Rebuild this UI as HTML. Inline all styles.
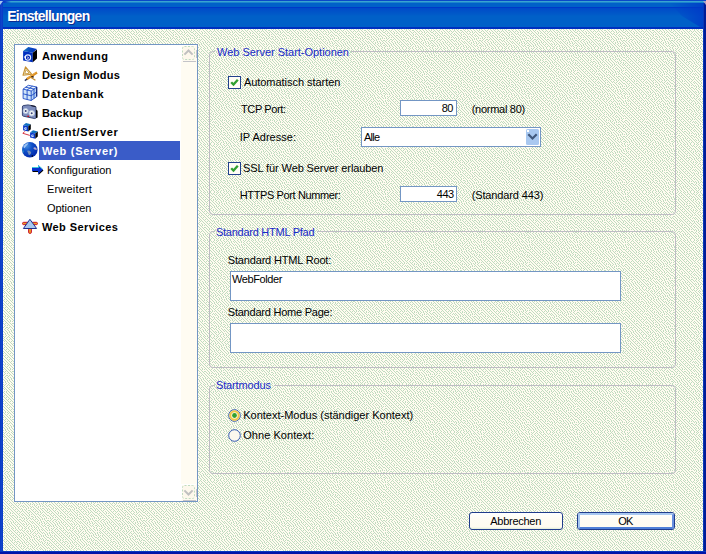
<!DOCTYPE html><html><head><meta charset="utf-8"><title>Einstellungen</title><style>
html,body{margin:0;padding:0}
body{width:706px;height:554px;position:relative;overflow:hidden;background:#fff;font:11px "Liberation Sans",sans-serif;color:#000}
.a{position:absolute}
.t{position:absolute;white-space:pre;line-height:13px;height:13px}
.bx{position:absolute;box-sizing:border-box;border:1px solid #7396C4;background:#fff}
.g{position:absolute;box-sizing:border-box;border:1px solid #BEBCC4;border-radius:4px}
.gap{position:absolute;height:3px}
svg{position:absolute;overflow:visible}

</style></head><body>
<svg width="706" height="554" style="left:0;top:0" shape-rendering="crispEdges"><defs><pattern id="dz" width="48" height="48" patternUnits="userSpaceOnUse"><rect width="48" height="48" fill="#FFFBF0"/><path d="M0 0.5h1M3 0.5h1M5 0.5h1M8 0.5h1M11 0.5h1M13 0.5h1M15 0.5h1M18 0.5h1M22 0.5h1M24 0.5h1M26 0.5h1M28 0.5h1M31 0.5h1M35 0.5h1M38 0.5h1M42 0.5h1M45 0.5h1M1 1.5h1M4 1.5h1M7 1.5h1M9 1.5h1M12 1.5h1M16 1.5h1M19 1.5h1M21 1.5h1M25 1.5h1M29 1.5h1M32 1.5h1M34 1.5h1M36 1.5h1M39 1.5h1M41 1.5h1M43 1.5h1M46 1.5h1M1 2.5h1M3 2.5h1M6 2.5h1M10 2.5h1M13 2.5h1M15 2.5h1M17 2.5h1M20 2.5h1M22 2.5h1M24 2.5h1M27 2.5h1M30 2.5h1M33 2.5h1M37 2.5h1M39 2.5h1M42 2.5h1M44 2.5h1M47 2.5h1M4 3.5h1M7 3.5h1M9 3.5h1M11 3.5h1M14 3.5h1M18 3.5h1M23 3.5h1M26 3.5h1M28 3.5h1M30 3.5h1M32 3.5h1M35 3.5h1M37 3.5h1M40 3.5h1M45 3.5h1M1 4.5h1M3 4.5h1M5 4.5h1M8 4.5h1M12 4.5h1M15 4.5h1M17 4.5h1M19 4.5h1M21 4.5h1M24 4.5h1M27 4.5h1M31 4.5h1M34 4.5h1M38 4.5h1M41 4.5h1M43 4.5h1M46 4.5h1M1 5.5h1M4 5.5h1M6 5.5h1M9 5.5h1M11 5.5h1M13 5.5h1M16 5.5h1M20 5.5h1M22 5.5h1M25 5.5h1M28 5.5h1M30 5.5h1M33 5.5h1M35 5.5h1M37 5.5h1M39 5.5h1M42 5.5h1M44 5.5h1M47 5.5h1M2 6.5h1M7 6.5h1M10 6.5h1M14 6.5h1M17 6.5h1M19 6.5h1M23 6.5h1M26 6.5h1M29 6.5h1M32 6.5h1M36 6.5h1M40 6.5h1M45 6.5h1M47 6.5h1M0 7.5h1M2 7.5h1M4 7.5h1M6 7.5h1M8 7.5h1M11 7.5h1M13 7.5h1M15 7.5h1M18 7.5h1M21 7.5h1M23 7.5h1M25 7.5h1M27 7.5h1M30 7.5h1M33 7.5h1M35 7.5h1M38 7.5h1M41 7.5h1M43 7.5h1M45 7.5h1M3 8.5h1M6 8.5h1M9 8.5h1M12 8.5h1M16 8.5h1M19 8.5h1M21 8.5h1M24 8.5h1M28 8.5h1M31 8.5h1M34 8.5h1M36 8.5h1M39 8.5h1M41 8.5h1M43 8.5h1M46 8.5h1M0 9.5h1M2 9.5h1M4 9.5h1M7 9.5h1M10 9.5h1M13 9.5h1M15 9.5h1M17 9.5h1M20 9.5h1M23 9.5h1M26 9.5h1M29 9.5h1M31 9.5h1M33 9.5h1M37 9.5h1M39 9.5h1M44 9.5h1M47 9.5h1M1 10.5h1M5 10.5h1M8 10.5h1M11 10.5h1M14 10.5h1M18 10.5h1M21 10.5h1M24 10.5h1M27 10.5h1M29 10.5h1M34 10.5h1M36 10.5h1M40 10.5h1M42 10.5h1M45 10.5h1M2 11.5h1M4 11.5h1M6 11.5h1M9 11.5h1M12 11.5h1M15 11.5h1M17 11.5h1M19 11.5h1M22 11.5h1M25 11.5h1M27 11.5h1M30 11.5h1M32 11.5h1M34 11.5h1M37 11.5h1M39 11.5h1M41 11.5h1M43 11.5h1M46 11.5h1M0 12.5h1M3 12.5h1M7 12.5h1M10 12.5h1M12 12.5h1M14 12.5h1M20 12.5h1M23 12.5h1M26 12.5h1M29 12.5h1M32 12.5h1M35 12.5h1M38 12.5h1M43 12.5h1M45 12.5h1M47 12.5h1M1 13.5h1M4 13.5h1M6 13.5h1M8 13.5h1M11 13.5h1M15 13.5h1M17 13.5h2M21 13.5h1M24 13.5h1M27 13.5h1M30 13.5h1M33 13.5h1M36 13.5h1M39 13.5h1M41 13.5h1M44 13.5h1M2 14.5h1M5 14.5h1M9 14.5h1M12 14.5h1M14 14.5h1M16 14.5h1M19 14.5h1M22 14.5h1M24 14.5h1M26 14.5h1M28 14.5h1M31 14.5h1M34 14.5h1M37 14.5h1M40 14.5h1M42 14.5h1M45 14.5h1M47 14.5h1M1 15.5h1M3 15.5h1M6 15.5h1M8 15.5h1M10 15.5h1M13 15.5h1M17 15.5h1M20 15.5h1M22 15.5h1M25 15.5h1M29 15.5h1M32 15.5h1M35 15.5h1M38 15.5h1M42 15.5h1M44 15.5h1M47 15.5h1M0 16.5h1M4 16.5h1M7 16.5h1M11 16.5h1M14 16.5h1M16 16.5h1M19 16.5h1M23 16.5h1M26 16.5h1M28 16.5h1M30 16.5h1M33 16.5h1M36 16.5h1M38 16.5h1M40 16.5h1M43 16.5h1M46 16.5h1M1 17.5h1M3 17.5h1M5 17.5h1M8 17.5h1M10 17.5h1M12 17.5h1M15 17.5h1M18 17.5h1M21 17.5h1M24 17.5h1M27 17.5h1M31 17.5h1M34 17.5h1M36 17.5h1M39 17.5h1M41 17.5h1M44 17.5h1M47 17.5h1M2 18.5h1M6 18.5h1M9 18.5h1M13 18.5h1M16 18.5h1M19 18.5h1M21 18.5h1M23 18.5h1M25 18.5h1M28 18.5h1M30 18.5h1M32 18.5h1M35 18.5h1M38 18.5h1M42 18.5h1M45 18.5h1M0 19.5h1M3 19.5h1M5 19.5h1M7 19.5h1M10 19.5h1M12 19.5h1M14 19.5h1M17 19.5h1M20 19.5h1M24 19.5h1M27 19.5h1M32 19.5h1M34 19.5h1M37 19.5h1M40 19.5h1M43 19.5h1M46 19.5h1M1 20.5h1M4 20.5h1M8 20.5h1M11 20.5h1M15 20.5h1M18 20.5h1M21 20.5h1M23 20.5h1M26 20.5h1M28 20.5h1M30 20.5h1M33 20.5h1M36 20.5h1M39 20.5h1M41 20.5h1M44 20.5h1M47 20.5h1M2 21.5h1M5 21.5h1M7 21.5h1M9 21.5h1M12 21.5h1M14 21.5h1M16 21.5h1M19 21.5h1M22 21.5h1M25 21.5h1M29 21.5h1M31 21.5h1M34 21.5h1M37 21.5h1M40 21.5h1M42 21.5h1M45 21.5h1M1 22.5h1M3 22.5h1M6 22.5h1M10 22.5h1M13 22.5h1M17 22.5h1M20 22.5h1M23 22.5h1M26 22.5h1M28 22.5h1M32 22.5h1M35 22.5h1M38 22.5h1M43 22.5h1M45 22.5h1M47 22.5h1M4 23.5h1M7 23.5h1M9 23.5h1M11 23.5h1M14 23.5h1M16 23.5h1M18 23.5h1M20 23.5h1M22 23.5h1M24 23.5h1M27 23.5h1M30 23.5h1M33 23.5h1M36 23.5h1M39 23.5h1M41 23.5h1M43 23.5h1M46 23.5h1M1 24.5h2M5 24.5h1M8 24.5h1M12 24.5h1M15 24.5h1M19 24.5h1M25 24.5h1M28 24.5h1M30 24.5h1M32 24.5h1M34 24.5h1M37 24.5h1M39 24.5h1M42 24.5h1M45 24.5h1M0 25.5h1M3 25.5h1M6 25.5h1M9 25.5h1M11 25.5h1M13 25.5h1M16 25.5h1M18 25.5h1M21 25.5h1M23 25.5h1M26 25.5h1M29 25.5h1M34 25.5h1M36 25.5h1M40 25.5h1M43 25.5h1M46 25.5h1M1 26.5h1M4 26.5h1M7 26.5h1M10 26.5h1M14 26.5h1M17 26.5h1M20 26.5h1M22 26.5h1M24 26.5h1M27 26.5h1M30 26.5h1M32 26.5h1M35 26.5h1M38 26.5h1M40 26.5h1M42 26.5h1M44 26.5h1M47 26.5h1M2 27.5h1M5 27.5h1M8 27.5h1M11 27.5h1M13 27.5h1M15 27.5h1M18 27.5h1M23 27.5h1M25 27.5h1M28 27.5h1M31 27.5h1M33 27.5h1M36 27.5h1M38 27.5h1M45 27.5h1M0 28.5h1M3 28.5h1M5 28.5h1M7 28.5h1M9 28.5h1M12 28.5h1M16 28.5h1M19 28.5h1M21 28.5h1M26 28.5h1M28 28.5h1M30 28.5h1M34 28.5h1M37 28.5h1M40 28.5h1M42 28.5h2M46 28.5h1M1 29.5h1M4 29.5h1M8 29.5h1M10 29.5h1M13 29.5h1M15 29.5h1M17 29.5h1M20 29.5h1M22 29.5h1M24 29.5h1M26 29.5h1M31 29.5h1M33 29.5h1M35 29.5h1M38 29.5h1M41 29.5h1M44 29.5h1M47 29.5h1M2 30.5h1M5 30.5h1M7 30.5h1M11 30.5h1M14 30.5h1M18 30.5h1M22 30.5h1M25 30.5h1M28 30.5h2M32 30.5h1M36 30.5h1M39 30.5h1M42 30.5h1M45 30.5h1M47 30.5h1M1 31.5h1M3 31.5h1M6 31.5h1M9 31.5h1M12 31.5h1M15 31.5h1M17 31.5h1M19 31.5h1M21 31.5h1M23 31.5h1M26 31.5h1M30 31.5h1M33 31.5h1M35 31.5h1M37 31.5h1M40 31.5h1M43 31.5h1M46 31.5h1M0 32.5h1M4 32.5h1M7 32.5h1M10 32.5h1M13 32.5h1M16 32.5h1M20 32.5h1M24 32.5h1M27 32.5h1M29 32.5h1M31 32.5h1M34 32.5h1M38 32.5h1M40 32.5h1M42 32.5h1M44 32.5h1M47 32.5h1M1 33.5h1M3 33.5h1M5 33.5h1M8 33.5h1M10 33.5h1M12 33.5h1M14 33.5h1M17 33.5h1M19 33.5h1M22 33.5h1M25 33.5h1M28 33.5h1M32 33.5h1M35 33.5h1M37 33.5h1M41 33.5h1M45 33.5h1M2 34.5h1M6 34.5h1M9 34.5h1M15 34.5h1M18 34.5h1M21 34.5h1M23 34.5h1M26 34.5h1M29 34.5h1M31 34.5h1M33 34.5h1M36 34.5h1M38 34.5h1M40 34.5h1M43 34.5h1M46 34.5h1M0 35.5h1M3 35.5h1M5 35.5h1M7 35.5h1M10 35.5h1M12 35.5h2M16 35.5h1M19 35.5h1M22 35.5h1M24 35.5h1M27 35.5h1M29 35.5h1M34 35.5h1M39 35.5h1M42 35.5h1M44 35.5h1M47 35.5h1M1 36.5h1M4 36.5h1M8 36.5h1M11 36.5h1M14 36.5h1M17 36.5h1M20 36.5h1M25 36.5h1M28 36.5h1M31 36.5h2M35 36.5h1M37 36.5h1M40 36.5h1M43 36.5h1M45 36.5h1M2 37.5h1M5 37.5h1M7 37.5h1M9 37.5h1M12 37.5h1M15 37.5h1M17 37.5h1M19 37.5h1M21 37.5h1M23 37.5h1M26 37.5h1M29 37.5h1M33 37.5h1M35 37.5h1M38 37.5h1M41 37.5h1M46 37.5h1M0 38.5h1M2 38.5h1M4 38.5h1M10 38.5h1M13 38.5h1M16 38.5h1M22 38.5h1M24 38.5h1M26 38.5h1M28 38.5h1M30 38.5h1M32 38.5h1M36 38.5h1M39 38.5h1M42 38.5h1M44 38.5h1M46 38.5h1M3 39.5h1M6 39.5h2M9 39.5h1M11 39.5h1M14 39.5h1M17 39.5h1M19 39.5h2M24 39.5h1M27 39.5h1M31 39.5h1M33 39.5h1M35 39.5h1M37 39.5h1M40 39.5h1M42 39.5h1M44 39.5h1M0 40.5h1M2 40.5h1M5 40.5h1M8 40.5h1M12 40.5h1M15 40.5h1M18 40.5h1M21 40.5h1M23 40.5h1M26 40.5h1M29 40.5h1M34 40.5h1M38 40.5h1M40 40.5h1M45 40.5h1M47 40.5h1M1 41.5h1M4 41.5h1M7 41.5h1M10 41.5h1M13 41.5h1M16 41.5h1M19 41.5h1M22 41.5h1M24 41.5h1M27 41.5h1M30 41.5h1M32 41.5h1M35 41.5h1M37 41.5h1M41 41.5h1M43 41.5h1M46 41.5h1M2 42.5h1M5 42.5h1M8 42.5h1M11 42.5h1M13 42.5h1M15 42.5h1M17 42.5h1M20 42.5h1M25 42.5h1M28 42.5h1M31 42.5h1M33 42.5h1M36 42.5h1M39 42.5h1M41 42.5h1M44 42.5h1M47 42.5h1M0 43.5h1M3 43.5h1M6 43.5h1M9 43.5h1M11 43.5h1M14 43.5h1M18 43.5h1M21 43.5h1M23 43.5h1M26 43.5h1M29 43.5h1M32 43.5h1M34 43.5h1M37 43.5h1M39 43.5h1M42 43.5h1M44 43.5h1M46 43.5h1M1 44.5h1M4 44.5h1M7 44.5h1M9 44.5h1M12 44.5h1M15 44.5h1M17 44.5h1M19 44.5h1M22 44.5h1M24 44.5h1M26 44.5h1M28 44.5h1M30 44.5h1M35 44.5h1M38 44.5h1M41 44.5h1M45 44.5h1M0 45.5h1M2 45.5h1M5 45.5h1M7 45.5h1M10 45.5h1M13 45.5h1M16 45.5h1M20 45.5h1M23 45.5h1M27 45.5h1M31 45.5h1M33 45.5h1M36 45.5h1M39 45.5h1M42 45.5h1M44 45.5h1M47 45.5h1M1 46.5h1M3 46.5h1M5 46.5h1M8 46.5h1M11 46.5h1M14 46.5h1M17 46.5h1M19 46.5h1M21 46.5h1M24 46.5h1M26 46.5h1M29 46.5h1M31 46.5h1M34 46.5h1M37 46.5h1M40 46.5h1M43 46.5h1M45 46.5h1M0 47.5h1M6 47.5h1M9 47.5h1M12 47.5h1M15 47.5h1M18 47.5h1M22 47.5h1M25 47.5h1M28 47.5h1M32 47.5h1M34 47.5h1M36 47.5h1M38 47.5h1M41 47.5h1M46 47.5h1" stroke="#C0DCC0" stroke-width="1" fill="none"/></pattern></defs><rect width="706" height="554" fill="url(#dz)"/></svg>
<!-- title bar -->
<div class="a" style="left:0;top:0;width:706px;height:29px;background:linear-gradient(to bottom,#0A48C8 0,#0A48C8 1px,#38A4D0 1px,#38A4D0 2px,#1C84CC 2px,#1C84CC 3px,#0060C8 3px,#0060C8 7px,#0038C8 7px,#0038C8 8px,#004AC8 8px,#005CC8 15px,#0060C8 16px,#0060C8 27px,#0030C0 27px,#0030C0 29px)"></div>
<!-- window borders -->
<svg width="46" height="24" style="left:660px;top:3px"><defs><linearGradient id="tr" x1="0" y1="0" x2="1" y2="0"><stop offset="0" stop-color="#0038C8" stop-opacity="0"/><stop offset="1" stop-color="#0038C8" stop-opacity="0.85"/></linearGradient></defs><path d="M10 0H46V24H40L22 13z" fill="url(#tr)"/></svg>
<div class="a" style="left:0;top:0;width:3px;height:554px;background:linear-gradient(to right,#0838C8,#1044C8 50%,#0838C8)"></div>
<div class="a" style="left:703px;top:3px;width:3px;height:551px;background:linear-gradient(to right,#0838B8 0,#0838B8 1px,#001C98 1px)"></div>
<div class="a" style="left:0;top:551px;width:706px;height:3px;background:linear-gradient(to bottom,#0838C0 0,#0838C0 1px,#0014A8 1px)"></div>
<div class="a" style="left:3px;top:1px;width:8px;height:2px;background:linear-gradient(to right,#0A40C8 0,#0A40C8 2px,rgba(10,64,200,0) 8px)"></div>
<svg width="6" height="6" style="left:0;top:0"><path d="M0 1h3L0 5z" fill="#A8C8F0"/></svg>
<svg width="6" height="6" style="left:700px;top:0"><path d="M6 1h-3L6 5z" fill="#A8A0C8"/></svg>
<!-- list box -->
<div class="bx" style="left:14px;top:44px;width:184px;height:458px"></div>
<div class="a" style="left:181px;top:45px;width:16px;height:456px;background:#FFFCF2"></div>
<div class="a" style="left:39px;top:141px;width:141px;height:19px;background:#3A5CC8"></div>
<!-- scroll buttons -->
<svg width="16" height="17" style="left:181px;top:45px" shape-rendering="crispEdges"><rect x="0" y="0" width="16" height="17" fill="#FEFAF0"/><path d="M0.5 16V0.5H15" stroke="#fff" fill="none"/><path d="M2 16.5H14.5M15.5 5V13" stroke="#C4C4C8" fill="none"/><rect x="1.5" y="1.5" width="12" height="13" rx="2" fill="#FDF8EC" stroke="#C0DCC0" stroke-dasharray="2 1.5" shape-rendering="auto"/><path d="M3.4 9.6L7.5 5.5L11.6 9.6" stroke="#C0C0C0" stroke-width="2" fill="none" shape-rendering="auto"/></svg>
<svg width="16" height="17" style="left:181px;top:484px" shape-rendering="crispEdges"><rect x="0" y="0" width="16" height="17" fill="#FEFAF0"/><path d="M0.5 16V0.5H15" stroke="#fff" fill="none"/><path d="M2 16.5H14.5M15.5 5V13" stroke="#C4C4C8" fill="none"/><rect x="1.5" y="1.5" width="12" height="13" rx="2" fill="#FDF8EC" stroke="#C0DCC0" stroke-dasharray="2 1.5" shape-rendering="auto"/><path d="M3.4 6.4L7.5 10.5L11.6 6.4" stroke="#C0C0C0" stroke-width="2" fill="none" shape-rendering="auto"/></svg>
<!-- group boxes -->
<div class="g" style="left:209px;top:51px;width:467px;height:164px"></div>
<div class="g" style="left:209px;top:231px;width:467px;height:137px"></div>
<div class="g" style="left:209px;top:385px;width:467px;height:89px"></div>
<svg width="140" height="3" style="left:215px;top:50px" shape-rendering="crispEdges"><rect width="136" height="3" fill="url(#dz)"/></svg>
<svg width="140" height="3" style="left:215px;top:230px" shape-rendering="crispEdges"><rect width="102" height="3" fill="url(#dz)"/></svg>
<svg width="140" height="3" style="left:215px;top:384px" shape-rendering="crispEdges"><rect width="59" height="3" fill="url(#dz)"/></svg>
<!-- inputs -->
<div class="bx" style="left:400px;top:100px;width:57px;height:16px"></div>
<div class="bx" style="left:361px;top:127px;width:180px;height:20px"></div>
<svg width="13" height="16" style="left:526px;top:129px"><rect width="13" height="16" rx="1.5" fill="#A8C8F0"/><rect x="1" y="1" width="2" height="2" fill="#fff"/><path d="M2.3 5.3L6.5 9.5L10.7 5.3" stroke="#40587C" stroke-width="2.2" fill="none"/></svg>
<div class="bx" style="left:400px;top:186px;width:57px;height:16px"></div>
<div class="bx" style="left:230px;top:271px;width:391px;height:30px"></div>
<div class="bx" style="left:230px;top:323px;width:391px;height:30px"></div>
<!-- checkboxes -->
<svg width="13" height="13" style="left:228px;top:76px"><rect x="0.5" y="0.5" width="12" height="12" fill="#FFFDF6" stroke="#20408C"/><path d="M3.2 6.2L5.5 8.6L9.8 3.8" stroke="#30A030" stroke-width="2.3" fill="none"/></svg>
<svg width="13" height="13" style="left:228px;top:162px"><rect x="0.5" y="0.5" width="12" height="12" fill="#FFFDF6" stroke="#20408C"/><path d="M3.2 6.2L5.5 8.6L9.8 3.8" stroke="#30A030" stroke-width="2.3" fill="none"/></svg>
<!-- radios -->
<svg width="13" height="13" style="left:228px;top:409px"><circle cx="6.5" cy="6.5" r="5.8" fill="#FFF8E0" stroke="#3058B0" stroke-width="1"/><circle cx="6.5" cy="6.5" r="4.2" fill="none" stroke="#F0C848" stroke-width="2"/><circle cx="6.5" cy="6.5" r="2.4" fill="#30A030"/></svg>
<svg width="13" height="13" style="left:228px;top:429px"><circle cx="6.5" cy="6.5" r="5.8" fill="#FBF8EE" stroke="#3058B0" stroke-width="1"/></svg>
<!-- buttons -->
<div class="a" style="left:469px;top:512px;width:94px;height:18px;box-sizing:border-box;border:1px solid #203C8C;border-radius:3px;background:linear-gradient(to bottom,#fff 0,#FFFCF4 6px,#FFFBF0 14px,#E0ECD8 16px)"></div>
<div class="a" style="left:577px;top:512px;width:98px;height:18px;box-sizing:border-box;border:1px solid #203C8C;border-radius:3px;background:linear-gradient(to bottom,#fff 0,#FFFCF4 6px,#FFFBF0 16px)"></div>
<div class="a" style="left:578px;top:513px;width:96px;height:16px;box-sizing:border-box;border-radius:2px;border:2px solid #A8C8F0;border-bottom-color:#5080D8;border-right-color:#6890E0"></div>
<!-- arrow -->
<svg width="13" height="11" style="left:32px;top:164px"><path d="M0.5 4h6V2l5 4.5l-5 4.5V8h-6z" fill="#000"/><path d="M0 3h6V1l5 4.5l-5 4.5V7h-6z" fill="#0830D0"/><path d="M0 3.5h6.5V1.5l4 3.6" stroke="#40C8D8" stroke-width="1" fill="none"/></svg>
<!-- icons -->
<svg width="16" height="16" style="left:22px;top:47px"><defs><linearGradient id="ct" x1="0" y1="0" x2="1" y2="0"><stop offset="0" stop-color="#1880C0"/><stop offset="0.5" stop-color="#0848C0"/><stop offset="1" stop-color="#0030C0"/></linearGradient></defs><path d="M1.1 4.1L6.3 0L15 2L10.8 5.8z" fill="url(#ct)"/><path d="M1.1 4.1L10.8 5.8V15.3L1.1 13.5z" fill="#0030C0"/><path d="M10.8 5.8L15 2.5V11.4L10.8 15.3z" fill="#000"/><circle cx="5.9" cy="10.6" r="2.7" fill="#0020B0" stroke="#E0ECFF" stroke-width="1.1"/><path d="M1.8 9.6h2.6l-1 2.2z" fill="#fff"/><path d="M5 9.8l1.8 1l-1.6 1" stroke="#fff" stroke-width="0.7" fill="none"/></svg>
<svg width="16" height="16" style="left:22px;top:66px"><path d="M3.5 0.8L1 9.2L9.8 8.3z" fill="#E4EED8" stroke="#C89030" stroke-width="1.1" stroke-linejoin="round"/><path d="M4.1 3.6L2.8 7.8L7.2 7.3z" fill="#fff" stroke="#C89030" stroke-width="0.8"/><path d="M4.6 13.3L15 6.5" stroke="#D88C1C" stroke-width="2.4"/><path d="M5 12.4L14.4 6.3" stroke="#F0B050" stroke-width="0.7"/><path d="M2.8 14.6L5 13.1" stroke="#303860" stroke-width="1.3"/><path d="M9.3 10.7l2.4 0.3" stroke="#301808" stroke-width="1.4"/><path d="M9 11.6L13.4 14.2" stroke="#C08828" stroke-width="1.2"/></svg>
<svg width="16" height="16" style="left:22px;top:85px"><path d="M1.1 4.1L6.3 0.3L14.8 2L9.2 6z" fill="#E8F2FC"/><path d="M1.1 4.1L9.2 6V15.5L1.1 13.5z" fill="#D0E4F8"/><path d="M9.2 6L14.8 2V11.5L9.2 15.5z" fill="#B8D4F4"/><path d="M1.1 4.1L6.3 0.3L14.8 2L9.2 6zM1.1 4.1V13.5L9.2 15.5V6M9.2 15.5L14.8 11.5V2M1.1 8.8L9.2 10.8L14.8 6.8M5.1 5V14.5M12 4V13.5M3.7 2.2L12 4M10.5 1.2L5.1 5" fill="none" stroke="#1444C4" stroke-width="0.85"/><path d="M14.7 2.2V11.5" stroke="#001060" stroke-width="0.9"/></svg>
<svg width="16" height="16" style="left:22px;top:104px"><path d="M1.2 1.6Q0.4 1.8 0.4 3V11.2Q0.5 12 1.4 12.2L12.8 14.6Q13.8 14.6 14 13.6V3.6Q14 2.4 12.8 2.2L6 0.9z" fill="#7C8CBC" stroke="#283868" stroke-width="0.9"/><path d="M8.5 1L13 1.9L14.2 3.2L9.5 2.3z" fill="#101020"/><path d="M14 5.5L15.6 6.8V13.4L14 14.2z" fill="#000"/><circle cx="3.7" cy="7" r="2.5" fill="#F4F8F4" stroke="#B8C8E4" stroke-width="1"/><circle cx="3.7" cy="7" r="1" fill="#38407C"/><circle cx="9.7" cy="9.2" r="2.7" fill="#F4F8F4" stroke="#B8C8E4" stroke-width="1"/><circle cx="9.7" cy="9.2" r="1" fill="#38407C"/><rect x="5.3" y="11.6" width="1.8" height="1.4" fill="#C81020"/></svg>
<svg width="16" height="16" style="left:22px;top:123px"><path d="M2.9 8.3L0.9 10.3L7.8 12.4" stroke="#D02030" stroke-width="0.9" fill="none" stroke-linejoin="round"/><g><path d="M1.1 2.2L4 0L8.8 1.2L6.3 3.2z" fill="#1070C0"/><path d="M1.1 2.2L6.3 3.2V8.5L1.1 7.3z" fill="#0838C8"/><path d="M6.3 3.2L8.8 1.2V6.3L6.3 8.5z" fill="#000"/><circle cx="3.6" cy="5.6" r="1.4" fill="#D8E8FF"/><circle cx="4" cy="5.5" r="0.6" fill="#0838C8"/></g><g transform="translate(7 7.2)"><path d="M1.1 2.2L4 0L8.8 1.2L6.3 3.2z" fill="#1070C0"/><path d="M1.1 2.2L6.3 3.2V8.5L1.1 7.3z" fill="#0838C8"/><path d="M6.3 3.2L8.8 1.2V6.3L6.3 8.5z" fill="#000"/><circle cx="3.6" cy="5.6" r="1.4" fill="#D8E8FF"/><circle cx="4" cy="5.5" r="0.6" fill="#0838C8"/></g></svg>
<svg width="16" height="16" style="left:22px;top:142px"><defs><radialGradient id="gl" cx="0.3" cy="0.25" r="0.85"><stop offset="0" stop-color="#4890E0"/><stop offset="0.4" stop-color="#1050C8"/><stop offset="1" stop-color="#0024A8"/></radialGradient></defs><circle cx="7.8" cy="7.8" r="7.8" fill="url(#gl)"/><path d="M1.2 5C2.5 2.2 5 0.9 6.5 1.3C5.5 3 4 4.2 2.6 6.2z" fill="#A0C4F4"/><path d="M0.6 6.5C1.2 8 2.2 9.2 2 11C1 10 0.3 8.5 0.6 6.5z" fill="#2090C8"/><path d="M5.2 9C7 7.8 8.8 9.4 9.2 11C8.3 12.6 7 13.8 6.4 12.2C6.4 10.9 5.3 10.3 5.2 9z" fill="#7890B8"/><path d="M11.3 6C12.5 4.3 14.6 5.4 15 7.5C13.5 8.1 11.9 7.6 11.3 6z" fill="#B0A8D0"/><circle cx="10.3" cy="14" r="0.7" fill="#000"/></svg>
<svg width="16" height="16" style="left:22px;top:218px"><rect x="0.5" y="4.3" width="15" height="2.4" rx="1.2" fill="#F0A020" stroke="#C81030" stroke-width="1"/><rect x="6.6" y="10" width="2.8" height="5.4" rx="1.2" fill="#F0A020" stroke="#C81030" stroke-width="1"/><path d="M7.9 1.3L1.4 10.5H14.6z" fill="#A8C8F0" stroke="#203090" stroke-width="1" stroke-linejoin="round"/></svg>

<div class="t" style="top:10px;font-size:14px;letter-spacing:-0.733px;font-weight:bold;left:7.2px;color:#fff;text-shadow:1px 1px 0 #0A2A90;">Einstellungen</div>
<div class="t" style="top:50px;font-size:11px;letter-spacing:0.383px;font-weight:bold;left:41.9px;">Anwendung</div>
<div class="t" style="top:69px;font-size:11px;letter-spacing:0.257px;font-weight:bold;left:41.9px;">Design Modus</div>
<div class="t" style="top:88px;font-size:11px;letter-spacing:0.681px;font-weight:bold;left:41.9px;">Datenbank</div>
<div class="t" style="top:107px;font-size:11px;letter-spacing:0.190px;font-weight:bold;left:41.9px;">Backup</div>
<div class="t" style="top:126px;font-size:11px;letter-spacing:0.677px;font-weight:bold;left:41.9px;">Client/Server</div>
<div class="t" style="top:145px;font-size:11px;letter-spacing:0.713px;font-weight:bold;left:41.9px;color:#fff;">Web (Server)</div>
<div class="t" style="top:164px;font-size:11px;letter-spacing:-0.027px;left:46.9px;">Konfiguration</div>
<div class="t" style="top:183px;font-size:11px;letter-spacing:0.199px;left:46.9px;">Erweitert</div>
<div class="t" style="top:202px;font-size:11px;letter-spacing:-0.022px;left:46.9px;">Optionen</div>
<div class="t" style="top:221px;font-size:11px;letter-spacing:0.423px;font-weight:bold;left:41.9px;">Web Services</div>
<div class="t" style="top:46px;font-size:11px;letter-spacing:-0.020px;left:217px;color:#1828C8;">Web Server Start-Optionen</div>
<div class="t" style="top:76px;font-size:11px;letter-spacing:-0.040px;left:243.9px;">Automatisch starten</div>
<div class="t" style="top:103px;font-size:11px;letter-spacing:-0.387px;left:241px;">TCP Port:</div>
<div class="t" style="top:131px;font-size:11px;letter-spacing:0.024px;left:239.7px;">IP Adresse:</div>
<div class="t" style="top:162px;font-size:11px;letter-spacing:-0.107px;left:243.1px;">SSL für Web Server erlauben</div>
<div class="t" style="top:189px;font-size:11px;letter-spacing:-0.387px;left:239.8px;">HTTPS Port Nummer:</div>
<div class="t" style="top:102px;font-size:11px;letter-spacing:-0.650px;right:253.25px;">80</div>
<div class="t" style="top:103px;font-size:11px;letter-spacing:-0.275px;left:471.7px;">(normal 80)</div>
<div class="t" style="top:131px;font-size:11px;letter-spacing:-0.715px;left:364px;">Alle</div>
<div class="t" style="top:188px;font-size:11px;letter-spacing:-0.430px;right:252.23px;">443</div>
<div class="t" style="top:189px;font-size:11px;letter-spacing:-0.130px;left:471.7px;">(Standard 443)</div>
<div class="t" style="top:226px;font-size:11px;letter-spacing:-0.260px;left:216px;color:#1828C8;">Standard HTML Pfad</div>
<div class="t" style="top:254px;font-size:11px;letter-spacing:-0.172px;left:227.8px;">Standard HTML Root:</div>
<div class="t" style="top:273px;font-size:11px;letter-spacing:-0.389px;left:232px;">WebFolder</div>
<div class="t" style="top:306px;font-size:11px;letter-spacing:-0.231px;left:227.8px;">Standard Home Page:</div>
<div class="t" style="top:379px;font-size:11px;letter-spacing:-0.139px;left:216px;color:#1828C8;">Startmodus</div>
<div class="t" style="top:409px;font-size:11px;letter-spacing:0.000px;left:243.2px;">Kontext-Modus (ständiger Kontext)</div>
<div class="t" style="top:429px;font-size:11px;letter-spacing:0.056px;left:243.2px;">Ohne Kontext:</div>
<div class="t" style="top:515px;font-size:11px;letter-spacing:-0.277px;left:490.3px;">Abbrechen</div>
<div class="t" style="top:515px;font-size:11px;letter-spacing:-0.906px;left:618.3px;">OK</div>
</body></html>
